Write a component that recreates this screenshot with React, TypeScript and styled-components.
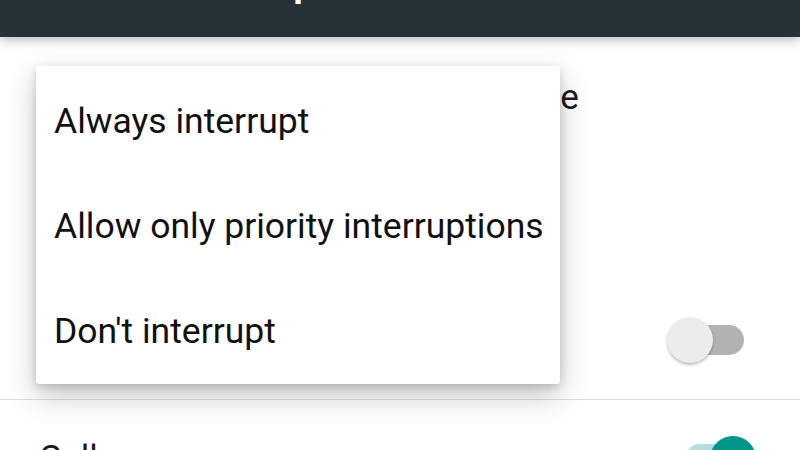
import React from 'react';
import styled, { createGlobalStyle } from 'styled-components';

const GlobalStyle = createGlobalStyle`
  html, body {
    margin: 0;
    padding: 0;
    background: #ffffff;
    overflow: hidden;
  }

  body {
    font-family: Roboto, "Noto Sans", "Liberation Sans", sans-serif;
    color: #1a1a1a;
  }
`;

const Screen = styled.div`
  position: relative;
  width: 800px;
  height: 450px;
  overflow: hidden;
  background: #ffffff;
`;

const AppBar = styled.header`
  position: relative;
  z-index: 2;
  height: 37px;
  display: flex;
  align-items: flex-end;
  padding-left: 162px;
  background: #263238;
  box-shadow: 0 3px 12px rgba(0, 0, 0, 0.28);
  overflow: hidden;
`;

const AppTitle = styled.h1`
  margin: 0 0 -2px;
  font-size: 44px;
  font-weight: 500;
  line-height: 1;
  color: #ffffff;
  transform: translateY(-37px);
`;

const List = styled.main`
  display: flex;
  flex-direction: column;
`;

const Row = styled.div<{ $height: number; $padRight?: number }>`
  display: flex;
  align-items: center;
  justify-content: space-between;
  height: ${(p) => p.$height}px;
  padding: 0 ${(p) => p.$padRight ?? 56}px 0 39px;
  box-sizing: border-box;
`;

const TextBlock = styled.div`
  display: flex;
  flex-direction: column;
  gap: 6px;
`;

const Title = styled.div`
  font-size: 35px;
  line-height: 42px;
  color: #1a1a1a;
  white-space: nowrap;
`;

const WideTitle = styled(Title)`
  letter-spacing: 0.15px;
`;

const Summary = styled.div`
  font-size: 28px;
  line-height: 36px;
  color: #757575;
  white-space: nowrap;
`;

const TopRow = styled.div`
  height: 163px;
  padding: 40px 0 0 39px;
  box-sizing: border-box;
`;

const SectionHeader = styled.div`
  height: 80px;
  display: flex;
  align-items: center;
  padding-left: 39px;
  font-size: 26px;
  font-weight: 500;
  color: #009688;
`;

const Divider = styled.hr`
  margin: 0;
  border: 0;
  height: 1px;
  background: #dddddd;
`;

const SwitchBox = styled.div<{ $on: boolean }>`
  position: relative;
  flex: none;
  width: ${(p) => (p.$on ? 80 : 77)}px;
  height: 46px;
`;

const Track = styled.div<{ $on: boolean }>`
  position: absolute;
  top: 8px;
  left: 9px;
  width: 68px;
  height: 30px;
  border-radius: 15px;
  background: ${(p) => (p.$on ? '#b2dfdb' : '#b2b2b2')};
`;

const Thumb = styled.div<{ $on: boolean }>`
  position: absolute;
  top: 0;
  left: ${(p) => (p.$on ? 34 : 0)}px;
  width: 46px;
  height: 46px;
  border-radius: 50%;
  background: ${(p) => (p.$on ? '#009688' : '#ececec')};
  box-shadow: 0 2px 3px rgba(0, 0, 0, 0.25);
`;

const Menu = styled.ul`
  position: absolute;
  z-index: 3;
  top: 66px;
  left: 36px;
  width: 524px;
  margin: 0;
  padding: 2px 0 1px;
  list-style: none;
  background: #ffffff;
  border-radius: 3px;
  box-shadow: 0 12px 30px rgba(0, 0, 0, 0.22), 0 3px 10px rgba(0, 0, 0, 0.16);
`;

const MenuItem = styled.li`
  height: 105px;
  display: flex;
  align-items: center;
  padding-left: 18px;
  font-size: 35.5px;
  color: #111111;
  white-space: nowrap;
`;

function Switch({ on }: { on: boolean }) {
  return (
    <SwitchBox $on={on}>
      <Track $on={on} />
      <Thumb $on={on} />
    </SwitchBox>
  );
}

const options = ['Always interrupt', 'Allow only priority interruptions', "Don't interrupt"];

export default function App() {
  return (
    <Screen>
      <GlobalStyle />
      <AppBar>
        <AppTitle>Interruptions</AppTitle>
      </AppBar>
      <List>
        <TopRow>
          <TextBlock>
            <WideTitle>When calls and notifications arrive</WideTitle>
            <Summary>Always interrupt</Summary>
          </TextBlock>
        </TopRow>
        <SectionHeader>Priority interruptions</SectionHeader>
        <Row $height={119}>
          <Title>Events and reminders</Title>
          <Switch on={false} />
        </Row>
        <Divider />
        <Row $height={117} $padRight={44}>
          <Title>Calls</Title>
          <Switch on />
        </Row>
      </List>
      <Menu>
        {options.map((o) => (
          <MenuItem key={o}>{o}</MenuItem>
        ))}
      </Menu>
    </Screen>
  );
}
